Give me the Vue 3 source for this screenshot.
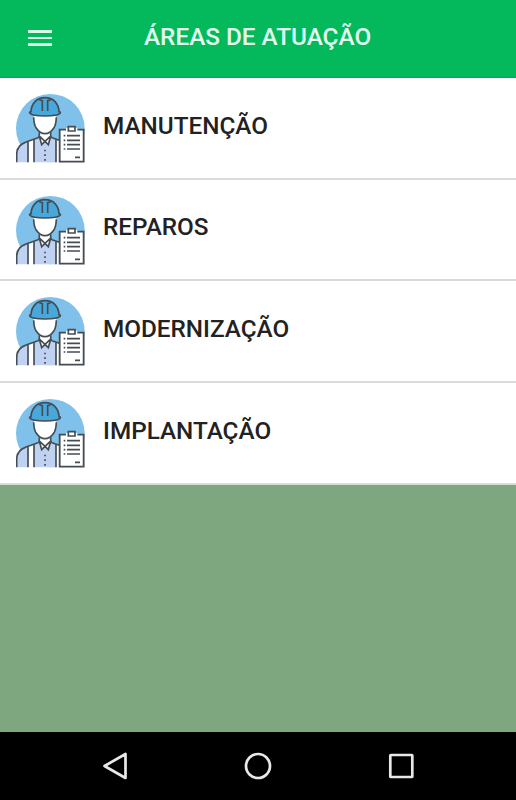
<template>
<div class="screen">
    <header class="toolbar">
        <button class="menu-btn" aria-label="Menu">
            <span></span>
            <span></span>
            <span></span>
        </button>
        <h1 class="title">ÁREAS DE ATUAÇÃO</h1>
    </header>

    <ul class="area-list">
        <li v-for="area in areas" :key="area" class="area">
            <svg class="area-icon" viewBox="0 0 210 210" fill="none">
                <circle cx="103" cy="103" r="103" fill="#7fc1ea" />
                <!-- shirt -->
                <path d="M0 206V181Q1 153 28 145L68 130H106L130 138V206Z" fill="#fff" />
                <path d="M2 205V181Q3 153 28 145L36 142V205ZM54 205V137L70 130L77 152L87 142L97 152L104 130L120 138V205Z" fill="#bfd2f2" />
                <!-- face -->
                <path d="M53 66Q55 103 71 114V127L87 142L103 127V114Q119 103 121 66Q86 50 53 66Z" fill="#fff" />
                <g stroke="#454d54" stroke-width="5">
                    <path d="M2 205V181Q3 153 28 145L66 131Q70 129 70 124V115M104 115V124Q104 129 108 131L130 139" />
                    <path d="M36 142V205M54 136V205M120 136V205" />
                    <path d="M70 127L77 152L87 142L97 152L104 127M71 127L87 142L103 127" />
                    <path d="M53 70Q54 93 60 101C68 113 79 119 87 119S106 113 114 101Q120 93 121 70" />
                    <!-- helmet -->
                    <path d="M45 53C46 28 62 11 87 11S128 28 129 53Q134 53 133 57C124 69 50 69 41 57Q40 53 45 53Z" fill="#48a8dc" />
                    <path d="M79 51V20L70 17M95 51V20L104 17" />
                </g>
                <path d="M87 167v5M87 181v5M87 195v5" stroke="#454d54" stroke-width="5" />
                <!-- clipboard -->
                <path d="M131 107H203V203H131Z" fill="#fff" stroke="#454d54" stroke-width="5.5" />
                <path d="M150 102H184V112H150Z" fill="#fff" />
                <path d="M157 98H177V111H157Z" fill="#fff" stroke="#454d54" stroke-width="5" />
                <path d="M143 125h5M143 139h5M143 152h5M143 165h5M153 125h39M153 139h39M153 152h39M153 165h39M177 190h15" stroke="#454d54" stroke-width="5" />
            </svg>
            <span class="area-name">{{ area }}</span>
        </li>
    </ul>

    <nav class="system-bar">
        <svg viewBox="0 0 28 28" class="nav-icon">
            <path d="M3.5 14L24.5 2V26Z" />
        </svg>
        <svg viewBox="0 0 28 28" class="nav-icon">
            <circle cx="14" cy="14" r="12" />
        </svg>
        <svg viewBox="0 0 28 28" class="nav-icon">
            <rect x="3.3" y="3" width="22" height="22" rx="0.5" />
        </svg>
    </nav>
</div>
</template>

<script setup>
import { ref } from 'vue';

const areas = ref([
    'MANUTENÇÃO',
    'REPAROS',
    'MODERNIZAÇÃO',
    'IMPLANTAÇÃO'
]);
</script>

<style>
body {
    margin: 0;
}
</style>

<style scoped>
.screen {
    display: flex;
    flex-direction: column;
    height: 800px;
    background: #7fa77f;
    font-family: Roboto, sans-serif;
}

.toolbar {
    display: flex;
    align-items: center;
    box-sizing: border-box;
    height: 78px;
    padding: 0 28px 4px;
    background: #03b95c;
    border-bottom: 1px solid #06a851;
}

.menu-btn {
    display: flex;
    flex-direction: column;
    gap: 4px;
    width: 24px;
    margin-top: 3px;
    padding: 0;
    border: none;
    background: none;
}

.menu-btn span {
    height: 2.67px;
    background: #dcfbe9;
}

.title {
    margin: 0 0 1px 92px;
    color: #e2fdef;
    font-size: 24.3px;
    font-weight: 500;
    white-space: nowrap;
}

.area-list {
    margin: 0;
    padding: 0;
    list-style: none;
}

.area {
    display: flex;
    align-items: center;
    box-sizing: border-box;
    height: 101.7px;
    padding: 0 15.5px;
    background: #fff;
    border-bottom: 2px solid #dadada;
}

.area-icon {
    width: 70px;
    height: 70px;
    margin-top: 2px;
}

.area-name {
    margin: 0 0 5.5px 17.5px;
    color: #222;
    font-size: 24.3px;
    font-weight: 500;
}

.system-bar {
    display: flex;
    align-items: center;
    justify-content: space-between;
    box-sizing: border-box;
    height: 68.5px;
    margin-top: auto;
    padding: 0 101px;
    background: #000;
}

.nav-icon {
    width: 28px;
    height: 28px;
    fill: none;
    stroke: #e8e8e8;
    stroke-width: 2.7;
    stroke-linejoin: round;
}
</style>
